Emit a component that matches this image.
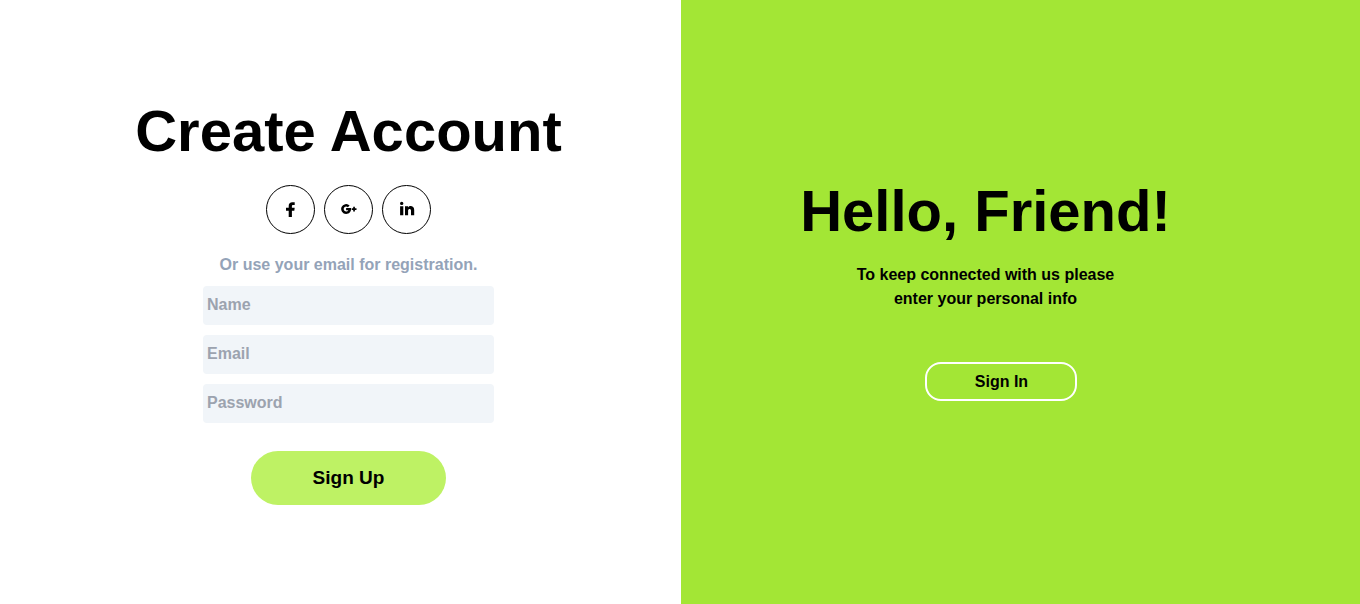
<main class="page">
  <section class="signup">
    <h1>Create Account</h1>
    <div class="social">
      <a href="#facebook" aria-label="Facebook">
        <svg width="20" height="20" viewBox="0 0 20 20"><path d="M7.7 17v-6.2H5V7.7h2.7V5.9C7.7 3.4 9.1 2.2 11.3 2.2h2.4v2.9h-1.5c-.9 0-1.3.4-1.3 1.2v1.4h2.8l-.4 3.1h-2.4V17z"/></svg>
      </a>
      <a href="#google" aria-label="Google Plus">
        <svg width="20" height="20" viewBox="0 0 20 20"><path d="M7.1 8h4.9c.5 3.5-1.6 5.9-4.9 5.9a4.9 4.9 0 1 1 3.5-8.3L8.9 7.2C7.1 5.7 4.7 6.8 4.7 9c0 2.8 3.7 3.3 4.6 1.2H7.1zM14.2 6.8h1.7v1.5h1.6v1.6h-1.6v1.5h-1.7V9.9h-1.5V8.3h1.5z"/></svg>
      </a>
      <a href="#linkedin" aria-label="LinkedIn">
        <svg width="20" height="20" viewBox="0 0 20 20"><path d="M3.1 6.3h3.2v8.9H3.1zM4.7 1.7a1.7 1.7 0 1 1 0 3.4 1.7 1.7 0 0 1 0-3.4zM8 6.3h3v1.1c1.6-2.2 6.2-1.7 6.2 2.5v5.3H14v-4.6c0-2.2-2.9-2.1-2.9 0v4.6H8z"/></svg>
      </a>
    </div>
    <p class="hint">Or use your email for registration.</p>
    <form onsubmit={(event) => event.preventDefault()}>
      <input type="text" placeholder="Name" aria-label="Name" />
      <input type="email" placeholder="Email" aria-label="Email" />
      <input type="password" placeholder="Password" aria-label="Password" />
      <button class="primary" type="submit">Sign Up</button>
    </form>
  </section>
  <section class="welcome">
    <div class="greeting">
      <h1>Hello, Friend!</h1>
      <p>To keep connected with us please<br />enter your personal info</p>
      <button class="outline" type="button">Sign In</button>
    </div>
  </section>
</main>

<style>
  :global(body) {
    margin: 0;
  }

  .page,
  .page * {
    box-sizing: border-box;
  }

  .page {
    display: grid;
    grid-template-columns: 681fr 679fr;
    min-height: 100vh;
    font-family: "Liberation Sans", Arial, sans-serif;
    font-size: 16px;
    font-weight: 700;
    line-height: 24px;
    color: #000;
    background: #fff;
  }

  h1,
  p {
    margin: 0;
  }

  h1 {
    font-size: 58px;
    line-height: 60px;
    white-space: nowrap;
  }

  .signup {
    display: flex;
    flex-direction: column;
    align-items: center;
    padding: 101px 0 40px 16px;
  }

  .social {
    display: flex;
    gap: 9px;
    margin: 24px 0 19px;
  }

  .social a {
    display: grid;
    place-items: center;
    width: 49px;
    height: 49px;
    border: 1px solid #000;
    border-radius: 50%;
    color: #000;
  }

  .social svg {
    display: block;
    fill: currentColor;
  }

  .hint {
    color: #94a3b8;
  }

  form {
    display: flex;
    flex-direction: column;
    align-items: center;
    gap: 10px;
    margin-top: 9px;
  }

  input {
    width: 291px;
    height: 39px;
    padding: 0 4px 2px;
    border: 0;
    border-radius: 4px;
    background: #f1f5f9;
    font: inherit;
    color: #000;
  }

  input::placeholder {
    color: #9ca3af;
    opacity: 1;
  }

  button {
    color: #000;
    font: inherit;
    cursor: pointer;
  }

  .primary {
    width: 195px;
    height: 54px;
    margin-top: 18px;
    border: 0;
    border-radius: 27px;
    background: #bef264;
    font-size: 19px;
  }

  .welcome {
    display: flex;
    flex-direction: column;
    align-items: center;
    padding: 181px 70px 40px 0;
    background: #a3e635;
    text-align: center;
  }

  .greeting {
    display: flex;
    flex-direction: column;
    align-items: center;
  }

  .greeting p {
    margin-top: 22px;
  }

  .outline {
    width: 152px;
    height: 39px;
    margin: 51px 0 0 32px;
    border: 2px solid #fff;
    border-radius: 16px;
    background: transparent;
  }
</style>
